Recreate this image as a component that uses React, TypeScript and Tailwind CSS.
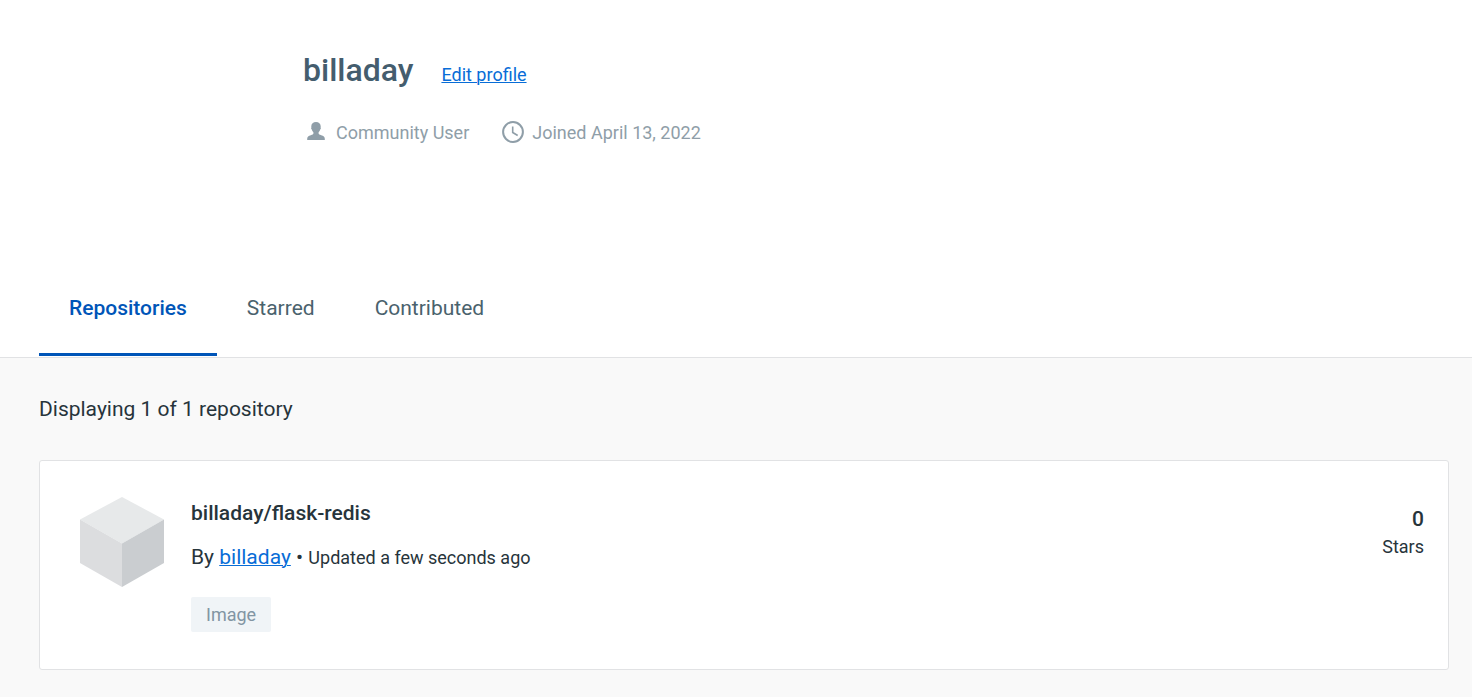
import { useState } from 'react';
import { clsx } from 'clsx';

// ============================================
// Types & Data
// ============================================

type ProfileTab = 'Repositories' | 'Starred' | 'Contributed';

interface Repository {
  name: string;
  owner: string;
  updated: string;
  kind: string;
  stars: number;
}

const tabs: ProfileTab[] = ['Repositories', 'Starred', 'Contributed'];

const repositories: Repository[] = [
  {
    name: 'billaday/flask-redis',
    owner: 'billaday',
    updated: 'Updated a few seconds ago',
    kind: 'Image',
    stars: 0,
  },
];

// ============================================
// Icons
// ============================================

function UserIcon() {
  return (
    <svg className="h-6 w-6" viewBox="-2 -1 24 24" fill="currentColor" aria-hidden="true">
      <path d="M10 0C7.2 0 5.3 1.700 5.300 4.300c0 .5 0 .9.1 1.300-.5.3-.3 1.700.4 2 .2 1.100.8 2 1.600 2.700v1.300c0 .7-1 1.100-2.600 1.700C2.500 14.100 1.200 14.800 1.200 16.700V18h17.600v-1.300c0-1.900-1.300-2.600-3.600-3.400-1.600-.6-2.600-1-2.600-1.700v-1.300c.8-.7 1.400-1.600 1.600-2.700.7-.3.9-1.700.4-2 .1-.4.1-.8.1-1.300C14.700 1.700 12.800 0 10 0z" />
    </svg>
  );
}

function ClockIcon() {
  return (
    <svg className="h-6 w-6" viewBox="0 0 24 24" fill="none" stroke="currentColor" aria-hidden="true">
      <circle cx="12" cy="11" r="9.900" strokeWidth="2" />
      <path d="M11.700 5.500v6l5 3" strokeWidth="1.600" />
    </svg>
  );
}

function CubeIcon() {
  return (
    <svg className="h-[90px] w-[84px] shrink-0" viewBox="0 0 84 90" aria-hidden="true">
      <path d="M42 0 84 22.500 42 46.500 0 22.500z" fill="#e7e9ea" />
      <path d="M0 22.500 42 46.500V90L0 66z" fill="#dcdddf" />
      <path d="M84 22.500 42 46.500V90L84 66z" fill="#cacdd0" />
    </svg>
  );
}

// ============================================
// Profile Header
// ============================================

function ProfileHeader() {
  return (
    <header className="px-4 pt-12 md:pl-[303px]">
      <div className="flex items-baseline gap-7">
        <h1 className="text-[32px] leading-11 font-medium text-[#445d6e]">billaday</h1>
        <a href="#edit" className="text-lg leading-6 text-[#086dd7] underline decoration-1">
          Edit profile
        </a>
      </div>
      <div className="mt-[29px] flex items-center gap-8 text-lg leading-6 text-[#8f9ea8]">
        <span className="flex items-center gap-2 pl-px">
          <UserIcon />
          Community User
        </span>
        <span className="flex items-center gap-[7px]">
          <ClockIcon />
          Joined April 13, 2022
        </span>
      </div>
    </header>
  );
}

// ============================================
// Repository Card
// ============================================

function RepositoryCard({ repo }: { repo: Repository }) {
  return (
    <article className="flex items-start gap-[27px] rounded-[3px] border border-[#e1e2e4] bg-white pt-9 pr-6 pb-[37px] pl-10">
      <CubeIcon />
      <div className="min-w-0 flex-1">
        <h2 className="text-[21px] leading-8 font-medium">{repo.name}</h2>
        <p className="mt-3 text-[21px] leading-8">
          By{' '}
          <a href="#owner" className="text-[#086dd7] underline decoration-1">
            {repo.owner}
          </a>{' '}
          • <span className="text-lg leading-8">{repo.updated}</span>
        </p>
        <span className="mt-[23px] block w-fit rounded-[2px] bg-[#f0f4f7] px-[15px] text-lg leading-[35px] text-[#8295a3]">
          {repo.kind}
        </span>
      </div>
      <div className="pt-2 text-right">
        <div className="text-[21px] leading-7 font-medium">{repo.stars}</div>
        <div className="text-lg leading-7">Stars</div>
      </div>
    </article>
  );
}

// ============================================
// Main Component
// ============================================

export default function App() {
  const [active, setActive] = useState<ProfileTab>('Repositories');

  return (
    <div className="flex min-h-screen flex-col bg-white font-[Roboto,sans-serif] text-[#27343b]">
      <ProfileHeader />

      {/* Tabs */}
      <nav className="mt-[115px] flex border-b border-[#e1e2e4] pb-px pl-[39px]">
        {tabs.map(tab => (
          <button
            key={tab}
            type="button"
            onClick={() => setActive(tab)}
            className={clsx(
              'border-b-3 px-[30px] pt-8 pb-[29px] text-[21px] leading-8',
              tab === active
                ? 'border-[#0055b8] font-medium text-[#0055b8]'
                : 'border-transparent text-[#4a626d]'
            )}
          >
            {tab}
          </button>
        ))}
      </nav>

      {/* Results */}
      <main className="flex-1 bg-[#f9f9f9] pt-9 pr-[23px] pb-[27px] pl-[39px]">
        <p className="text-[21px] leading-[30px]">Displaying 1 of 1 repository</p>
        <div className="mt-9">
          {repositories.map(repo => (
            <RepositoryCard key={repo.name} repo={repo} />
          ))}
        </div>
      </main>
    </div>
  );
}
